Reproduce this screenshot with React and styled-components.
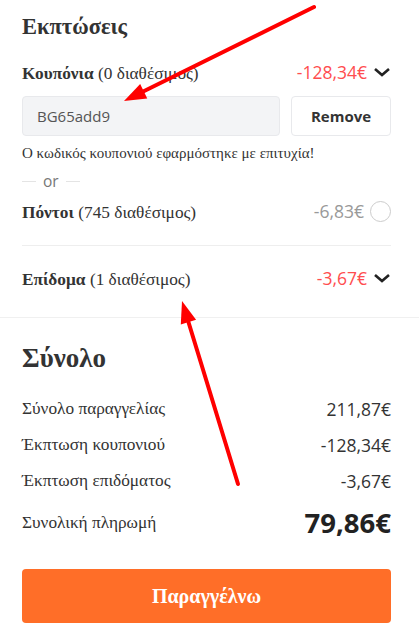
import React from "react";
import styled, { createGlobalStyle } from "styled-components";

const GlobalStyle = createGlobalStyle`
  body {
    margin: 0;
    background: #fff;
    color: #333;
    font-family: "Open Sans", sans-serif;
  }
  * {
    box-sizing: border-box;
  }
`;

const Page = styled.div`
  position: relative;
  width: 419px;
  height: 632px;
  overflow: hidden;
  background: #fff;
`;
const Section = styled.section`
  display: flex;
  flex-direction: column;
  padding: ${(p) => p.$pad || "0 28px 0 22px"};
`;
const Gr = styled.span`
  font-family: "Liberation Serif", "Times New Roman", serif;
  font-weight: ${(p) => (p.$bold ? 700 : 400)};
`;
const Heading = styled.h2`
  margin: 0;
  font-family: "Liberation Serif", serif;
  font-size: ${(p) => p.$size || "22.5px"};
  font-weight: 700;
  color: #333;
  line-height: 26px;
`;
const Row = styled.div`
  display: flex;
  align-items: center;
  justify-content: space-between;
  height: ${(p) => p.$h || "24px"};
  margin-top: ${(p) => p.$mt || "0"};
  font-size: 17.3px;
  color: #333;
`;
const Right = styled.div`
  display: flex;
  align-items: center;
  gap: 6px;
`;
const Amount = styled.span`
  font-family: "Open Sans", sans-serif;
  font-size: 17.5px;
  color: ${(p) => p.$color || "#333"};
`;
const CouponRow = styled.div`
  display: flex;
  gap: 11px;
  margin-top: 12px;
`;
const CodeInput = styled.div`
  flex: 1;
  height: 40px;
  display: flex;
  align-items: center;
  padding-left: 14px;
  background: #f3f4f6;
  border: 1px solid #e8e9ec;
  border-radius: 4px;
  font-size: 15px;
  color: #555;
`;
const RemoveBtn = styled.button`
  width: 100px;
  height: 40px;
  background: #fff;
  border: 1px solid #e8e9ec;
  border-radius: 4px;
  font-family: "Open Sans", sans-serif;
  font-size: 15px;
  font-weight: 700;
  color: #333;
`;
const Success = styled.p`
  margin: 7px 0 0;
  height: 20px;
  line-height: 20px;
  font-family: "Liberation Serif", serif;
  font-size: 15px;
  color: #333;
`;
const OrLine = styled.div`
  display: flex;
  align-items: center;
  gap: 7px;
  height: 20px;
  margin-top: 8px;
  font-size: 15.5px;
  color: #777;
  &::before,
  &::after {
    content: "";
    width: 14px;
    height: 1px;
    background: #e4e4e4;
  }
`;
const Divider = styled.hr`
  margin: 0;
  margin-top: ${(p) => p.$mt || "0"};
  border: 0;
  border-top: 1px solid ${(p) => p.$color || "#eee"};
`;
const Radio = styled.span`
  width: 21px;
  height: 21px;
  border: 1px solid #ccc;
  border-radius: 50%;
`;
const SumRow = styled(Row)`
  height: ${(p) => p.$h || "36px"};
`;
const Total = styled.span`
  font-family: "Open Sans", sans-serif;
  font-size: 27.5px;
  font-weight: 700;
  color: #222;
`;
const OrderBtn = styled.button`
  margin-top: 23px;
  height: 54px;
  border: 0;
  border-radius: 4px;
  background: #ff6e28;
  color: #fff;
  font-family: "Liberation Serif", serif;
  font-size: 20px;
  font-weight: 700;
`;
const Overlay = styled.svg`
  position: absolute;
  inset: 0;
  pointer-events: none;
`;

const Chevron = () => (
  <svg width="18" height="12" viewBox="0 0 18 12">
    <path d="M2 3l7 6 7-6" fill="none" stroke="#222" strokeWidth="2.6" />
  </svg>
);

const Arrow = ({ x1, y1, x2, y2 }) => {
  const a = Math.atan2(y2 - y1, x2 - x1);
  const len = 22;
  const w = 8;
  const bx = x2 - len * Math.cos(a);
  const by = y2 - len * Math.sin(a);
  const px = -Math.sin(a) * w;
  const py = Math.cos(a) * w;
  return (
    <g fill="#f00" stroke="#f00">
      <line x1={x1} y1={y1} x2={bx} y2={by} strokeWidth="4" strokeLinecap="round" />
      <polygon
        points={`${x2},${y2} ${bx + px},${by + py} ${bx - px},${by - py}`}
        stroke="none"
      />
    </g>
  );
};

export default function App() {
  return (
    <Page>
      <GlobalStyle />
      <Section $pad="14px 28px 7px 22px">
        <Heading>Εκπτώσεις</Heading>
        <Row $mt="20px">
          <span>
            <Gr $bold>Κουπόνια</Gr> <Gr>(0 διαθέσιμος)</Gr>
          </span>
          <Right>
            <Amount $color="#ff4d4f">-128,34€</Amount>
            <Chevron />
          </Right>
        </Row>
        <CouponRow>
          <CodeInput>BG65add9</CodeInput>
          <RemoveBtn>Remove</RemoveBtn>
        </CouponRow>
        <Success>Ο κωδικός κουπονιού εφαρμόστηκε με επιτυχία!</Success>
        <OrLine>or</OrLine>
        <Row $mt="8px">
          <span>
            <Gr $bold>Πόντοι</Gr> <Gr>(745 διαθέσιμος)</Gr>
          </span>
          <Right>
            <Amount $color="#999">-6,83€</Amount>
            <Radio />
          </Right>
        </Row>
        <Divider $mt="22px" />
        <Row $h="64px">
          <span>
            <Gr $bold>Επίδομα</Gr> <Gr>(1 διαθέσιμος)</Gr>
          </span>
          <Right>
            <Amount $color="#ff4d4f">-3,67€</Amount>
            <Chevron />
          </Right>
        </Row>
      </Section>
      <Divider $color="#f0f0f0" />
      <Section $pad="27px 28px 0 22px">
        <Heading $size="27px">Σύνολο</Heading>
        <SumRow style={{ marginTop: 20 }}>
          <Gr>Σύνολο παραγγελίας</Gr>
          <Amount>211,87€</Amount>
        </SumRow>
        <SumRow>
          <Gr>Έκπτωση κουπονιού</Gr>
          <Amount>-128,34€</Amount>
        </SumRow>
        <SumRow>
          <Gr>Έκπτωση επιδόματος</Gr>
          <Amount>-3,67€</Amount>
        </SumRow>
        <SumRow $h="47px">
          <Gr>Συνολική πληρωμή</Gr>
          <Total>79,86€</Total>
        </SumRow>
        <OrderBtn>Παραγγέλνω</OrderBtn>
      </Section>
      <Overlay width="419" height="632">
        <Arrow x1={314} y1={7} x2={124} y2={101} />
        <Arrow x1={238} y1={484} x2={182} y2={301} />
      </Overlay>
    </Page>
  );
}
